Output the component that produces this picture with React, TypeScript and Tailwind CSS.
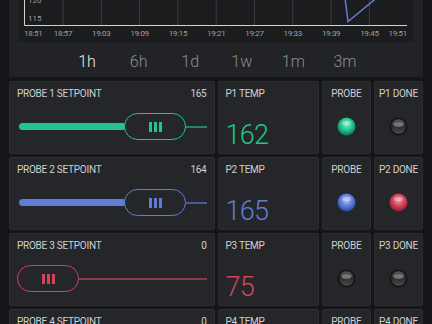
import { FC } from "react";

type Accent = "green" | "blue" | "red" | "off";

const ACCENT: Record<Exclude<Accent, "off">, { main: string; light: string; dark: string }> = {
  green: { main: "#23C48E", light: "#7ff2c6", dark: "#0f7a55" },
  blue: { main: "#5F7CD8", light: "#b0c2f7", dark: "#2f4aa0" },
  red: { main: "#D3435C", light: "#f59aaa", dark: "#8c1f33" },
};

const TIMES = ["18:51", "18:57", "19:03", "19:09", "19:15", "19:21", "19:27", "19:33", "19:39", "19:45", "19:51"];
const RANGES = ["1h", "6h", "1d", "1w", "1m", "3m"];

// little glossy LED drawn as svg
const Led: FC<{ color: Accent; id: string }> = ({ color, id }) => {
  if (color === "off") {
    return (
      <svg width="19" height="19" viewBox="0 0 19 19">
        <defs>
          <linearGradient id={id} x1="0" y1="0" x2="0" y2="1">
            <stop offset="0%" stopColor="#5c5c5c" />
            <stop offset="45%" stopColor="#2b2b2b" />
            <stop offset="100%" stopColor="#4a4a4a" />
          </linearGradient>
        </defs>
        <circle cx="9.5" cy="9.5" r="9" fill="#141415" />
        <circle cx="9.5" cy="9.5" r="7.3" fill={`url(#${id})`} />
        <ellipse cx="9.5" cy="7.6" rx="5" ry="2.4" fill="#ffffff" opacity="0.32" />
      </svg>
    );
  }
  const c = ACCENT[color];
  return (
    <svg width="19" height="19" viewBox="0 0 19 19">
      <defs>
        <radialGradient id={id} cx="50%" cy="38%" r="60%">
          <stop offset="0%" stopColor={c.light} />
          <stop offset="55%" stopColor={c.main} />
          <stop offset="100%" stopColor={c.dark} />
        </radialGradient>
      </defs>
      <circle cx="9.5" cy="9.5" r="9" fill={`url(#${id})`} />
      <ellipse cx="9.5" cy="6" rx="4.5" ry="2.2" fill="#ffffff" opacity="0.3" />
    </svg>
  );
};

const Title: FC<{ children: React.ReactNode; className?: string }> = ({ children, className = "" }) => (
  <div className={`h-[12px] text-[10px] leading-[12px] tracking-tight text-[#cfd0d2] uppercase ${className}`}>
    {children}
  </div>
);

const Slider: FC<{ color: Exclude<Accent, "off">; fill: number }> = ({ color, fill }) => {
  const c = ACCENT[color].main;
  return (
    <div className="mt-[13px] flex h-[27px] items-center">
      {fill > 0 && (
        <div className="ml-[2px] h-[7px] rounded-full" style={{ width: fill, backgroundColor: c }} />
      )}
      <div
        className={`${fill > 0 ? "-ml-[2px]" : ""} flex h-[27px] w-[62px] shrink-0 items-center justify-center gap-[2px] rounded-full border-[1.5px] bg-[#252629]`}
        style={{ borderColor: c }}
      >
        <span className="h-[10px] w-[3px]" style={{ backgroundColor: c }} />
        <span className="h-[10px] w-[3px]" style={{ backgroundColor: c }} />
        <span className="h-[10px] w-[3px]" style={{ backgroundColor: c }} />
      </div>
      <div className="h-[2px] flex-1 opacity-60" style={{ backgroundColor: c }} />
    </div>
  );
};

type Probe = {
  n: number;
  setpoint: number;
  temp: number | null;
  color: Exclude<Accent, "off">;
  fill: number;
  probe: Accent;
  done: Accent;
};

const PROBES: Probe[] = [
  { n: 1, setpoint: 165, temp: 162, color: "green", fill: 107, probe: "green", done: "off" },
  { n: 2, setpoint: 164, temp: 165, color: "blue", fill: 107, probe: "blue", done: "red" },
  { n: 3, setpoint: 0, temp: 75, color: "red", fill: 0, probe: "off", done: "off" },
  { n: 4, setpoint: 0, temp: null, color: "green", fill: 0, probe: "off", done: "off" },
];

const card = "h-[73px] bg-[#252629] border border-[#2c2d31] rounded-[2px]";

const Chart: FC = () => (
  <svg width="395" height="42" viewBox="18 0 395 42" className="block">
    {TIMES.slice(1, -1).map((_, i) => {
      const x = 24.7 + 38.3 * (i + 1);
      return <line key={i} x1={x} y1={-5} x2={x} y2={25} stroke="#3a3b3f" strokeWidth="1" />;
    })}
    <line x1="24.5" y1="-5" x2="24.5" y2="25.5" stroke="#d2d2d2" strokeWidth="1" />
    <line x1="24.5" y1="25.5" x2="407" y2="25.5" stroke="#d2d2d2" strokeWidth="1" />
    <text x="28" y="3" fontSize="8" fill="#9c9c9c" fontFamily="Roboto, sans-serif">120</text>
    <text x="28" y="21" fontSize="8" fill="#9c9c9c" fontFamily="Roboto, sans-serif">115</text>
    <polyline points="344,-10 348,21.5 379,-4" fill="none" stroke="#5F7CD8" strokeWidth="1.5" />
    {TIMES.map((t, i) => {
      const x = i === 0 ? 24 : i === TIMES.length - 1 ? 407 : 24.7 + 38.3 * i;
      const anchor = i === 0 ? "start" : i === TIMES.length - 1 ? "end" : "middle";
      return (
        <text key={t} x={x} y="36" fontSize="8" fill="#a0a0a0" textAnchor={anchor} fontFamily="Roboto, sans-serif" letterSpacing="-0.3">
          {t}
        </text>
      );
    })}
  </svg>
);

const App: FC = () => {
  return (
    <div className="h-[324px] w-[432px] overflow-hidden bg-[#161618] px-[9px] font-['Roboto',sans-serif]">
      {/* Chart */}
      <div className="rounded-b-[2px] bg-[#222326] px-[9px]">
        <div className="h-[42px] bg-[#1b1c1e]">
          <Chart />
        </div>
        <div className="flex h-[35px] items-center justify-center pt-[4px]">
          {RANGES.map((r, i) => (
            <div
              key={r}
              className={`w-[51.6px] text-center text-[16px] font-light ${i === 0 ? "text-[#ececec]" : "text-[#8c8d90]"}`}
            >
              {r}
            </div>
          ))}
        </div>
      </div>

      {/* Probe rows */}
      <div className="mt-[4px] grid grid-cols-8 gap-[3px]">
        {PROBES.map((p) => (
          <div key={p.n} className="contents">
            <div className={`col-span-4 ${card} px-[7px] pt-[6px]`}>
              <div className="flex justify-between">
                <Title>Probe {p.n} Setpoint</Title>
                <Title>{p.setpoint}</Title>
              </div>
              <Slider color={p.color} fill={p.fill} />
            </div>
            <div className={`col-span-2 ${card} px-[7px] pt-[6px]`}>
              <Title>P{p.n} Temp</Title>
              {p.temp !== null && (
                <div
                  className="mt-[22px] text-[27px] leading-[27px] font-light tracking-tight"
                  style={{ color: ACCENT[p.color].main }}
                >
                  {p.temp}
                </div>
              )}
            </div>
            <div className={`col-span-1 ${card} flex flex-col items-center pt-[6px]`}>
              <Title>Probe</Title>
              <div className="mt-[17px]">
                <Led color={p.probe} id={`probe-${p.n}`} />
              </div>
            </div>
            <div className={`col-span-1 ${card} flex flex-col items-center pt-[6px]`}>
              <Title>P{p.n} Done</Title>
              <div className="mt-[17px]">
                <Led color={p.done} id={`done-${p.n}`} />
              </div>
            </div>
          </div>
        ))}
      </div>
    </div>
  );
};

export default App;
